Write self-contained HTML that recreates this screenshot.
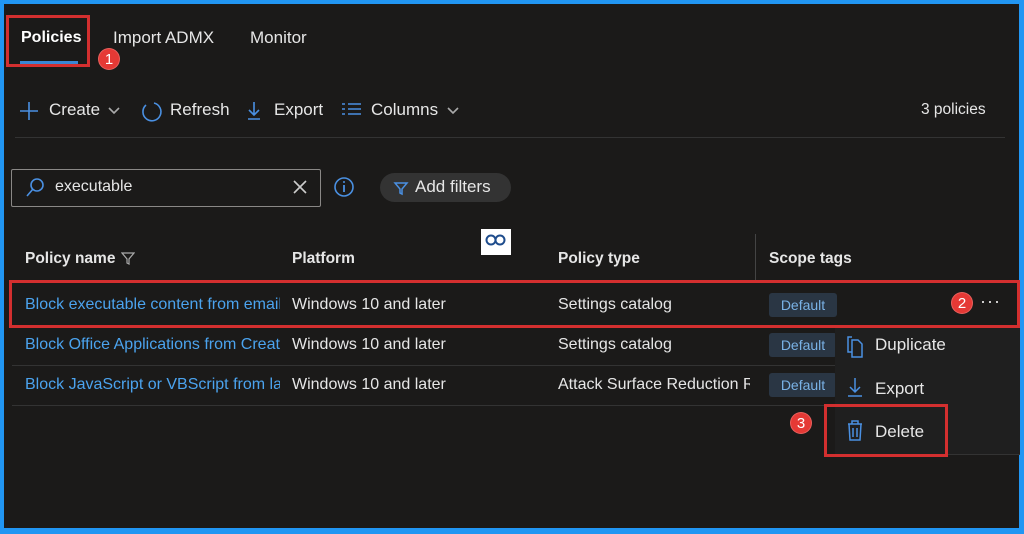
<!DOCTYPE html>
<html><head><style>
*{margin:0;padding:0;box-sizing:border-box}
body{width:1024px;height:534px;background:#2196f3;position:relative;overflow:hidden;font-family:"Liberation Sans",sans-serif;font-size:17px;color:#e6e6e6}
#m{position:absolute;left:4px;top:4px;width:1015px;height:524px;background:#1b1a19}
.a{position:absolute;white-space:nowrap}
.red{position:absolute;border:3px solid #d32f2f}
.badge{position:absolute;width:22px;height:22px;border-radius:50%;background:#e53935;color:#fff;font-size:15px;text-align:center;line-height:22px;border:1px solid #fff3}
.link{color:#4ba3ee}
.r{font-size:16px}
.chip{position:absolute;width:68px;height:24px;background:#2a3644;color:#7ab2e6;font-size:14px;text-align:center;line-height:24px;border-radius:3px}
.hr{position:absolute;height:1px;background:#333}
</style></head><body>
<div id="m"></div>
<div class="a" style="left:21px;top:29px;font-weight:bold;color:#fff;font-size:16px">Policies</div>
<div class="a" style="left:20px;top:61px;width:58px;height:3px;background:#3a86d4"></div>
<div class="a" style="left:113px;top:28px">Import ADMX</div>
<div class="a" style="left:250px;top:28px">Monitor</div>
<div class="red" style="left:6px;top:15px;width:84px;height:52px"></div>
<div class="badge" style="left:98px;top:48px">1</div>

<svg class="a" style="left:18px;top:99px" width="460" height="24" fill="none" stroke-width="1.6">
<path d="M2 12H20M11 3V21" stroke="#4a90e2"/>
<path d="M91 9l5 5 5-5" stroke="#aaa"/>
<path d="M128 6a9 9 0 1 0 8 -2" stroke="#4a90e2"/>
<path d="M236 3v13M231 11l5 5 5-5M230 20h12" stroke="#4a90e2"/>
<path d="M324 5h3M324 10h3M324 15h3M330 5h13M330 10h13M330 15h13" stroke="#4a90e2"/>
<path d="M430 9l5 5 5-5" stroke="#aaa"/>
</svg>
<div class="a" style="left:49px;top:100px">Create</div>
<div class="a" style="left:170px;top:100px">Refresh</div>
<div class="a" style="left:274px;top:100px">Export</div>
<div class="a" style="left:371px;top:100px">Columns</div>
<div class="a" style="left:921px;top:101px;font-size:15.5px">3 policies</div>
<div class="hr" style="left:15px;top:137px;width:990px"></div>

<div class="a" style="left:11px;top:169px;width:310px;height:38px;border:1px solid #8a8886;border-radius:2px"></div>
<svg class="a" style="left:24px;top:176px" width="300" height="24" fill="none" stroke-width="1.6">
<circle cx="13" cy="9" r="6" stroke="#4a90e2"/><path d="M9 13L3 20" stroke="#4a90e2"/>
<path d="M270 5l12 12M282 5l-12 12" stroke="#ccc"/>
</svg>
<div class="a" style="left:55px;top:178px;font-size:16px">executable</div>
<svg class="a" style="left:333px;top:176px" width="22" height="22" fill="none"><circle cx="11" cy="11" r="9" stroke="#4a90e2" stroke-width="1.6"/><path d="M11 9v7" stroke="#4a90e2" stroke-width="1.8"/><circle cx="11" cy="6" r="1" fill="#4a90e2"/></svg>
<div class="a" style="left:380px;top:173px;width:131px;height:29px;border-radius:15px;background:#333"></div>
<svg class="a" style="left:393px;top:180px" width="16" height="16" fill="none"><path d="M2 3h12l-5 6v5l-2-1V9z" stroke="#4a90e2" stroke-width="1.5"/></svg>
<div class="a" style="left:415px;top:177px">Add filters</div>

<div class="a" style="left:481px;top:229px;width:30px;height:26px;background:#fff"></div>
<svg class="a" style="left:484px;top:233px" width="24" height="14" fill="none" stroke="#1e4c8c" stroke-width="2"><circle cx="7" cy="7" r="4.5"/><circle cx="16" cy="7" r="4.5"/></svg>
<div class="a" style="left:25px;top:250px;font-weight:bold;font-size:15.5px">Policy name</div>
<svg class="a" style="left:121px;top:251px" width="14" height="14" fill="none"><path d="M1 2h12l-5 6v5l-2-1V8z" stroke="#aaa" stroke-width="1.2"/></svg>
<div class="a" style="left:292px;top:250px;font-weight:bold;font-size:15.5px">Platform</div>
<div class="a" style="left:558px;top:250px;font-weight:bold;font-size:15.5px">Policy type</div>
<div class="a" style="left:755px;top:234px;width:1px;height:46px;background:#444"></div>
<div class="a" style="left:769px;top:250px;font-weight:bold;font-size:15.5px">Scope tags</div>

<div class="hr" style="left:12px;top:365px;width:1005px"></div>
<div class="hr" style="left:12px;top:405px;width:1005px"></div>
<div class="a link r" style="left:25px;top:296px;width:255px;overflow:hidden">Block executable content from email</div>
<div class="a link r" style="left:25px;top:336px;width:255px;overflow:hidden">Block Office Applications from Creating</div>
<div class="a link r" style="left:25px;top:376px;width:255px;overflow:hidden">Block JavaScript or VBScript from launching</div>
<div class="a r" style="left:292px;top:296px">Windows 10 and later</div>
<div class="a r" style="left:292px;top:336px">Windows 10 and later</div>
<div class="a r" style="left:292px;top:376px">Windows 10 and later</div>
<div class="a r" style="left:558px;top:296px">Settings catalog</div>
<div class="a r" style="left:558px;top:336px">Settings catalog</div>
<div class="a r" style="left:558px;top:376px;width:192px;overflow:hidden">Attack Surface Reduction Rules</div>
<div class="chip" style="left:769px;top:293px">Default</div>
<div class="chip" style="left:769px;top:333px">Default</div>
<div class="chip" style="left:769px;top:373px">Default</div>
<div class="red" style="left:9px;top:280px;width:1011px;height:48px"></div>
<div class="badge" style="left:951px;top:292px">2</div>
<div class="a" style="left:980px;top:291px;font-size:18px;letter-spacing:1px">···</div>

<div class="a" style="left:835px;top:328px;width:185px;height:127px;background:#1f1f1f;border-bottom:1px solid #333"></div>
<svg class="a" style="left:845px;top:334px" width="20" height="110" fill="none" stroke="#4a90e2" stroke-width="1.5">
<path d="M7 3H3v15h4"/><path d="M7 6h6l4 4v13H7z"/>
<path d="M10 44v14M5 53l5 5 5-5M3 62h14"/>
<path d="M3 90h14M7 90V87h6v3M4 90l1 16h10l1-16M8 94v9M12 94v9"/>
</svg>
<div class="a" style="left:875px;top:335px">Duplicate</div>
<div class="a" style="left:875px;top:379px">Export</div>
<div class="a" style="left:875px;top:422px">Delete</div>
<div class="red" style="left:824px;top:404px;width:124px;height:53px"></div>
<div class="badge" style="left:790px;top:412px">3</div>
</body></html>
